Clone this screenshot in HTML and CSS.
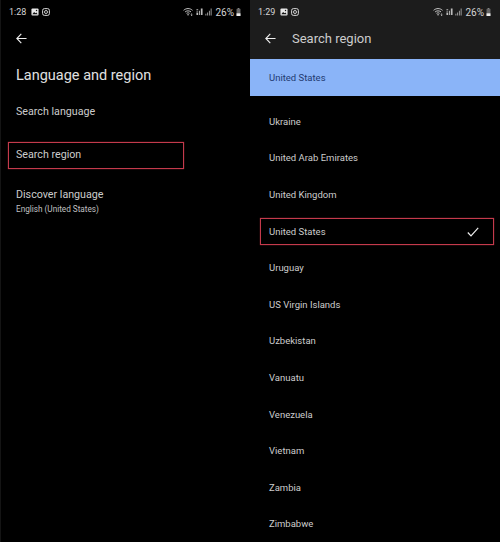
FILE: index.html
```html
<!DOCTYPE html>
<html lang="en">
<head>
    <meta charset="UTF-8">
    <meta name="viewport" content="width=device-width, initial-scale=1.0">
    <title>Language and region</title>
    <link rel="stylesheet" href="styles.css">
</head>
<body>
    <div class="screens">
        <!-- Left phone -->
        <section class="screen">
            <div class="status-bar">
                <span class="clock">1:28</span>
                <svg class="status-icon" viewBox="0 0 9 9"><rect x="0.5" y="0.5" width="8" height="8" rx="1.2" fill="#e8e8e8"/><path d="M1.5 7L3.5 4.5 5 6 6 5 7.5 7z" fill="#111"/><circle cx="6.2" cy="2.8" r="0.8" fill="#111"/></svg>
                <svg class="status-icon" viewBox="0 0 9 9" fill="none" stroke="#ddd"><rect x="0.7" y="0.7" width="7.6" height="7.6" rx="2" stroke-width="1.1"/><circle cx="4.5" cy="4.5" r="1.7" stroke-width="1"/></svg>
                <span class="status-right">
                    <svg class="wifi" viewBox="0 0 12 9" fill="none" stroke="#ddd" stroke-width="1"><path d="M0.5 2.6C3.5 0 7.5 0 10.5 2.6M2.2 4.4C4.2 2.8 6.8 2.8 8.8 4.4M3.8 6C4.8 5.3 6.2 5.3 7.2 6"/><circle cx="5.5" cy="7.6" r="0.8" fill="#ddd" stroke="none"/><path d="M9.5 6v2.6M8.5 7.6l1 1 1-1" stroke-width="0.7"/></svg>
                    <svg class="sim" viewBox="0 0 8 9"><path d="M0.5 1h2v1h-2zM0.5 3h2v1h-2zM0.5 5h2v3h-2zM3.5 3h1v5h-1zM5.5 0.5h2v7.5h-2z" fill="#bbb"/></svg>
                    <svg class="signal" viewBox="0 0 8 9"><path d="M0.5 6.5h1v2h-1zM2.5 5h1v3.500h-1zM4.500 3h1v5.500h-1zM6.500 0.500h1v8h-1z" fill="#aaa"/></svg>
                    <span class="battery-text">26%</span>
                    <svg class="battery" viewBox="0 0 5 9"><path d="M1.500 0h2v1h-2z" fill="#999"/><rect x="0.300" y="1" width="4.400" height="8" fill="#666"/><rect x="0.300" y="6" width="4.400" height="3" fill="#eee"/></svg>
                </span>
            </div>
            <div class="back-row">
                <svg class="back-arrow" viewBox="0 0 12 12" fill="none" stroke="#eee" stroke-width="1.200"><path d="M11.500 6H1M5.800 1L0.900 6l4.900 5"/></svg>
            </div>
            <h1 class="page-title">Language and region</h1>
            <div class="setting">Search language</div>
            <div class="setting setting-marked"><span>Search region</span></div>
            <div class="setting setting-double">
                <span>Discover language</span>
                <small>English (United States)</small>
            </div>
        </section>

        <!-- Right phone -->
        <section class="screen">
            <div class="app-bar">
                <div class="status-bar">
                    <span class="clock">1:29</span>
                    <svg class="status-icon" viewBox="0 0 9 9"><rect x="0.5" y="0.5" width="8" height="8" rx="1.2" fill="#e8e8e8"/><path d="M1.5 7L3.5 4.5 5 6 6 5 7.5 7z" fill="#111"/><circle cx="6.2" cy="2.8" r="0.8" fill="#111"/></svg>
                    <svg class="status-icon" viewBox="0 0 9 9" fill="none" stroke="#ddd"><rect x="0.7" y="0.7" width="7.6" height="7.6" rx="2" stroke-width="1.1"/><circle cx="4.5" cy="4.5" r="1.7" stroke-width="1"/></svg>
                    <span class="status-right">
                        <svg class="wifi" viewBox="0 0 12 9" fill="none" stroke="#ddd" stroke-width="1"><path d="M0.5 2.6C3.5 0 7.5 0 10.5 2.6M2.2 4.4C4.2 2.8 6.8 2.8 8.8 4.4M3.8 6C4.8 5.3 6.2 5.3 7.2 6"/><circle cx="5.5" cy="7.6" r="0.8" fill="#ddd" stroke="none"/><path d="M9.5 6v2.6M8.5 7.6l1 1 1-1" stroke-width="0.7"/></svg>
                        <svg class="sim" viewBox="0 0 8 9"><path d="M0.5 1h2v1h-2zM0.5 3h2v1h-2zM0.5 5h2v3h-2zM3.5 3h1v5h-1zM5.5 0.5h2v7.5h-2z" fill="#bbb"/></svg>
                        <svg class="signal" viewBox="0 0 8 9"><path d="M0.5 6.5h1v2h-1zM2.5 5h1v3.500h-1zM4.500 3h1v5.500h-1zM6.500 0.500h1v8h-1z" fill="#aaa"/></svg>
                        <span class="battery-text">26%</span>
                        <svg class="battery" viewBox="0 0 5 9"><path d="M1.500 0h2v1h-2z" fill="#999"/><rect x="0.300" y="1" width="4.400" height="8" fill="#666"/><rect x="0.300" y="6" width="4.400" height="3" fill="#eee"/></svg>
                    </span>
                </div>
                <div class="title-row">
                    <svg class="back-arrow" viewBox="0 0 12 12" fill="none" stroke="#eee" stroke-width="1.200"><path d="M11.500 6H1M5.800 1L0.900 6l4.900 5"/></svg>
                    <span class="bar-title">Search region</span>
                </div>
            </div>
            <div class="current-region">United States</div>
            <ul class="region-list">
                <li>Ukraine</li>
                <li>United Arab Emirates</li>
                <li>United Kingdom</li>
                <li class="region-marked">
                    <span>United States</span>
                    <svg class="check" viewBox="0 0 12 10" fill="none" stroke="#eee" stroke-width="1.200"><path d="M0.800 5.500L4 8.800 11.200 0.800"/></svg>
                </li>
                <li>Uruguay</li>
                <li>US Virgin Islands</li>
                <li>Uzbekistan</li>
                <li>Vanuatu</li>
                <li>Venezuela</li>
                <li>Vietnam</li>
                <li>Zambia</li>
                <li>Zimbabwe</li>
            </ul>
        </section>
    </div>
</body>
</html>
```

FILE: styles.css
```css
html, body {
    margin: 0;
    height: 100%;
    background: #000;
}
body {
    font-family: Roboto, "Liberation Sans", sans-serif;
    color: #d6d6d6;
    overflow: hidden;
}
.screens {
    display: flex;
    height: 542px;
}
.screen {
    width: 250px;
    height: 542px;
    overflow: hidden;
    background: #000;
    border-left: 1px solid #141414;
    box-sizing: border-box;
}
.screen + .screen {
    border-left: 0;
}

/* status bar */
.status-bar {
    display: flex;
    align-items: center;
    gap: 3px;
    height: 24px;
    padding: 0 9px 0 8px;
}
.clock {
    font-size: 9px;
    color: #d4d4d4;
    margin-right: 2px;
}
.status-icon {
    width: 8px;
    height: 8px;
}
.status-right {
    display: flex;
    align-items: center;
    gap: 2px;
    margin-left: auto;
}
.wifi {
    width: 11px;
    height: 8px;
}
.sim {
    width: 7px;
    height: 8px;
}
.signal {
    width: 7px;
    height: 8px;
    margin-right: 1px;
}
.battery-text {
    font-size: 10px;
    color: #d4d4d4;
}
.battery {
    width: 5px;
    height: 8px;
}

/* left screen */
.back-row {
    display: flex;
    align-items: center;
    height: 28px;
    padding-left: 15px;
}
.back-arrow {
    width: 11px;
    height: 11px;
}
.page-title {
    margin: 14px 0 0 15px;
    font-size: 14.5px;
    font-weight: 400;
    line-height: 20px;
    color: #e0e0e0;
}
.setting {
    margin-top: 19px;
    padding-left: 15px;
    font-size: 10.7px;
    line-height: 14px;
    color: #cccccc;
}
.setting-marked {
    display: flex;
    align-items: center;
    width: 167px;
    height: 23px;
    margin: 23px 0 0 7px;
    padding-left: 7px;
    padding-bottom: 2px;
    box-sizing: content-box;
    border: 1px solid #c43a4c;
    box-shadow: 0 0 1px #a02a3a;
}
.setting-double {
    margin-top: 19px;
}
.setting-double span,
.setting-double small {
    display: block;
}
.setting-double small {
    margin-top: 1px;
    font-size: 8.2px;
    line-height: 12px;
    color: #c0c0c0;
}

/* right screen */
.app-bar {
    height: 59px;
    background: #1c1c1c;
}
.title-row {
    display: flex;
    align-items: center;
    gap: 16px;
    height: 28px;
    padding-left: 15px;
}
.bar-title {
    font-size: 13px;
    color: #cccccc;
}
.current-region {
    display: flex;
    align-items: center;
    height: 37px;
    padding-left: 19px;
    font-size: 9.5px;
    background: #8ab4f8;
    color: #1f3a70;
}
.region-list {
    list-style: none;
    margin: 0;
    padding: 7px 0 0;
}
.region-list li {
    display: flex;
    align-items: center;
    height: 36.6px;
    padding-left: 19px;
    font-size: 9.5px;
    color: #cccccc;
}
.region-list .region-marked {
    justify-content: space-between;
    box-sizing: border-box;
    height: 27px;
    margin: 5.3px 6px 4.3px 10px;
    padding: 0 14px 0 8px;
    border: 1px solid #c43a4c;
    box-shadow: 0 0 1px #a02a3a;
}
.check {
    width: 12px;
    height: 10px;
}
```
